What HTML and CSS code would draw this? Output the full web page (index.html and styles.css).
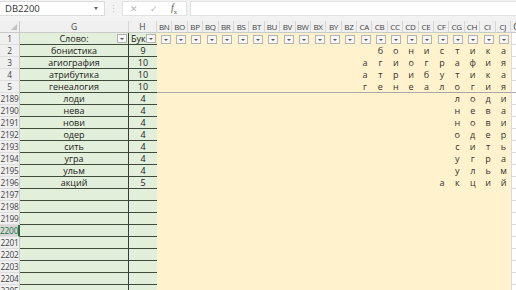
FILE: index.html
```html
<!DOCTYPE html>
<html>
<head>
<meta charset="utf-8">
<link rel="stylesheet" href="styles.css">
</head>
<body>
<div class="app">
  <div class="toolbar">
    <div class="namebox"><span class="nb-text">DB2200</span><span class="nb-arrow"></span></div>
    <div class="sep">⋮</div>
    <div class="fbtns"><span class="fb x">✕</span><span class="fb ok">✓</span><span class="fb fx"><i>f</i><sub>x</sub></span></div>
    <div class="finput"></div>
  </div>
  <div class="sheet">
    <div class="row hdr">
      <div class="rh corner"><span class="tri"></span></div>
      <div class="ch g-w">G</div>
      <div class="ch h-w">H</div>
      <div class="cols">
        <span>BN</span><span>BO</span><span>BP</span><span>BQ</span><span>BR</span><span>BS</span><span>BT</span><span>BU</span><span>BV</span><span>BW</span><span>BX</span><span>BY</span><span>BZ</span><span>CA</span><span>CB</span><span>CC</span><span>CD</span><span>CE</span><span>CF</span><span>CG</span><span>CH</span><span>CI</span><span>CJ</span>
      </div>
      <div class="ch ck-h">CK</div>
    </div>
    <div class="row">
      <div class="rh">1</div>
      <div class="g">Слово:<span class="fbtn"></span></div>
      <div class="h"><span class="htxt">Буквы</span><span class="fbtn"></span></div>
      <div class="letters filters">
        <span><i class="fbtn"></i></span><span><i class="fbtn"></i></span><span><i class="fbtn"></i></span><span><i class="fbtn"></i></span><span><i class="fbtn"></i></span><span><i class="fbtn"></i></span><span><i class="fbtn"></i></span><span><i class="fbtn"></i></span><span><i class="fbtn"></i></span><span><i class="fbtn"></i></span><span><i class="fbtn"></i></span><span><i class="fbtn"></i></span><span><i class="fbtn"></i></span><span><i class="fbtn"></i></span><span><i class="fbtn"></i></span><span><i class="fbtn"></i></span><span><i class="fbtn"></i></span><span><i class="fbtn"></i></span><span><i class="fbtn"></i></span><span><i class="fbtn"></i></span><span><i class="fbtn"></i></span><span><i class="fbtn"></i></span><span><i class="fbtn"></i></span>
      </div>
      <div class="ck"></div>
    </div>
    <div class="row">
      <div class="rh">2</div><div class="g">бонистика</div><div class="h">9</div>
      <div class="letters"><span>б</span><span>о</span><span>н</span><span>и</span><span>с</span><span>т</span><span>и</span><span>к</span><span>а</span></div>
      <div class="ck"></div>
    </div>
    <div class="row">
      <div class="rh">3</div><div class="g">агиография</div><div class="h">10</div>
      <div class="letters"><span>а</span><span>г</span><span>и</span><span>о</span><span>г</span><span>р</span><span>а</span><span>ф</span><span>и</span><span>я</span></div>
      <div class="ck"></div>
    </div>
    <div class="row">
      <div class="rh">4</div><div class="g">атрибутика</div><div class="h">10</div>
      <div class="letters"><span>а</span><span>т</span><span>р</span><span>и</span><span>б</span><span>у</span><span>т</span><span>и</span><span>к</span><span>а</span></div>
      <div class="ck"></div>
    </div>
    <div class="row frozen">
      <div class="rh">5</div><div class="g">генеалогия</div><div class="h">10</div>
      <div class="letters"><span>г</span><span>е</span><span>н</span><span>е</span><span>а</span><span>л</span><span>о</span><span>г</span><span>и</span><span>я</span></div>
      <div class="ck"></div>
    </div>
    <div class="row">
      <div class="rh">2189</div><div class="g">лоди</div><div class="h">4</div>
      <div class="letters"><span>л</span><span>о</span><span>д</span><span>и</span></div>
      <div class="ck"></div>
    </div>
    <div class="row">
      <div class="rh">2190</div><div class="g">нева</div><div class="h">4</div>
      <div class="letters"><span>н</span><span>е</span><span>в</span><span>а</span></div>
      <div class="ck"></div>
    </div>
    <div class="row">
      <div class="rh">2191</div><div class="g">нови</div><div class="h">4</div>
      <div class="letters"><span>н</span><span>о</span><span>в</span><span>и</span></div>
      <div class="ck"></div>
    </div>
    <div class="row">
      <div class="rh">2192</div><div class="g">одер</div><div class="h">4</div>
      <div class="letters"><span>о</span><span>д</span><span>е</span><span>р</span></div>
      <div class="ck"></div>
    </div>
    <div class="row">
      <div class="rh">2193</div><div class="g">сить</div><div class="h">4</div>
      <div class="letters"><span>с</span><span>и</span><span>т</span><span>ь</span></div>
      <div class="ck"></div>
    </div>
    <div class="row">
      <div class="rh">2194</div><div class="g">угра</div><div class="h">4</div>
      <div class="letters"><span>у</span><span>г</span><span>р</span><span>а</span></div>
      <div class="ck"></div>
    </div>
    <div class="row">
      <div class="rh">2195</div><div class="g">ульм</div><div class="h">4</div>
      <div class="letters"><span>у</span><span>л</span><span>ь</span><span>м</span></div>
      <div class="ck"></div>
    </div>
    <div class="row">
      <div class="rh">2196</div><div class="g">акций</div><div class="h">5</div>
      <div class="letters"><span>а</span><span>к</span><span>ц</span><span>и</span><span>й</span></div>
      <div class="ck"></div>
    </div>
    <div class="row"><div class="rh">2197</div><div class="g"></div><div class="h"></div><div class="letters"></div><div class="ck"></div></div>
    <div class="row"><div class="rh">2198</div><div class="g"></div><div class="h"></div><div class="letters"></div><div class="ck"></div></div>
    <div class="row"><div class="rh">2199</div><div class="g"></div><div class="h"></div><div class="letters"></div><div class="ck"></div></div>
    <div class="row"><div class="rh sel">2200</div><div class="g"></div><div class="h"></div><div class="letters"></div><div class="ck"></div></div>
    <div class="row"><div class="rh">2201</div><div class="g"></div><div class="h"></div><div class="letters"></div><div class="ck"></div></div>
    <div class="row"><div class="rh">2202</div><div class="g"></div><div class="h"></div><div class="letters"></div><div class="ck"></div></div>
    <div class="row"><div class="rh">2203</div><div class="g"></div><div class="h"></div><div class="letters"></div><div class="ck"></div></div>
    <div class="row"><div class="rh">2204</div><div class="g"></div><div class="h"></div><div class="letters"></div><div class="ck"></div></div>
    <div class="row"><div class="rh">2205</div><div class="g"></div><div class="h"></div><div class="letters"></div><div class="ck"></div></div>
  </div>
</div>
</body>
</html>
```
FILE: styles.css
```css
* { box-sizing: border-box; }
html, body { margin: 0; padding: 0; }
body {
  width: 516px;
  height: 290px;
  overflow: hidden;
  background: #f3f3f3;
  font-family: "Open Sans", "Noto Sans", sans-serif;
  color: #262626;
}
.app { width: 516px; height: 290px; overflow: hidden; }

/* formula bar */
.toolbar {
  display: flex;
  height: 17px;
  margin-bottom: 4px;
  padding-top: 1px;
}
.namebox {
  width: 105px;
  height: 15px;
  background: #fff;
  border: 1px solid #dcdcdc;
  border-left: none;
  display: flex;
  align-items: center;
  justify-content: space-between;
  padding: 0 6px 0 5px;
  font-size: 9.5px;
  color: #333;
}
.nb-arrow {
  width: 0; height: 0;
  border-left: 2.5px solid transparent;
  border-right: 2.5px solid transparent;
  border-top: 3px solid #666;
}
.sep {
  width: 17px;
  text-align: center;
  font-size: 9px;
  line-height: 15px;
  color: #bdbdbd;
}
.fbtns {
  width: 65px;
  height: 15px;
  background: #fff;
  border: 1px solid #e2e2e2;
  display: flex;
  align-items: center;
  padding-left: 1px;
  font-size: 8.5px;
  color: #b5b5b5;
}
.fb { width: 20px; text-align: center; }
.fb.fx { color: #555; font-family: "Liberation Serif", serif; font-size: 10px; }
.fb.fx sub { font-size: 6.5px; }
.finput {
  flex: 1;
  margin-left: 3px;
  height: 15px;
  background: #fff;
  border: 1px solid #e2e2e2;
  border-right: none;
}

/* sheet */
.sheet { display: flex; flex-direction: column; }
.row {
  display: flex;
  height: 12px;
  flex: none;
  font-size: 9px;
  line-height: 12px;
}
.rh {
  width: 20px;
  flex: none;
  background: #f0f0f0;
  border-right: 1px solid #c9c9c9;
  border-bottom: 1px solid #dedede;
  color: #444;
  font-size: 8.3px;
  line-height: 11px;
  text-align: center;
  letter-spacing: -0.2px;
  overflow: hidden;
  white-space: nowrap;
}
.rh.sel {
  background: #d6d6d6;
  color: #217346;
  border-right: 2px solid #217346;
}
.corner { position: relative; background: #f0f0f0; }
.tri {
  position: absolute;
  right: 2px; bottom: 2px;
  width: 0; height: 0;
  border-left: 6px solid transparent;
  border-bottom: 6px solid #c3c3c3;
}
.hdr .rh, .hdr .ch, .hdr .cols span {
  background: #f0f0f0;
  border-bottom: 1px solid #c9c9c9;
}
.ch {
  flex: none;
  text-align: center;
  color: #444;
  font-size: 8.5px;
  line-height: 11px;
  border-right: 1px solid #d6d6d6;
}
.g-w { width: 109px; }
.h-w { width: 28px; }
.ck-h { flex: 1; text-align: left; padding-left: 2px; border-right: none; overflow: hidden; }
.cols {
  display: grid;
  grid-template-columns: repeat(23, 15.4px);
  width: 354.2px;
  flex: none;
}
.cols span {
  text-align: center;
  color: #444;
  font-size: 8px;
  line-height: 11px;
  letter-spacing: -0.3px;
  border-right: 1px solid #d6d6d6;
  white-space: nowrap;
  overflow: hidden;
}

.g, .h {
  flex: none;
  background: #e2efda;
  border-bottom: 1px solid #3f4a3a;
  text-align: center;
  color: #222;
  line-height: 11px;
  position: relative;
  white-space: nowrap;
}
.g { width: 109px; border-right: 1px solid #3a3a3a; }
.h { width: 28px; }
.htxt {
  position: absolute;
  left: 2px; top: 0;
  width: 15px;
  overflow: hidden;
  text-align: left;
}

.fbtn {
  position: absolute;
  right: 1px; top: 1px;
  width: 10px; height: 9px;
  background: #f7f7f7;
  border: 1px solid #b4b4b4;
  display: flex;
  align-items: center;
  justify-content: center;
}
.fbtn::after {
  content: "";
  width: 0; height: 0;
  border-left: 2px solid transparent;
  border-right: 2px solid transparent;
  border-top: 2.5px solid #555;
}

.letters {
  flex: none;
  width: 354.2px;
  background: #fff2cc;
  display: grid;
  grid-auto-flow: column;
  grid-auto-columns: 15.4px;
  justify-content: end;
}
.letters span {
  text-align: center;
  color: #333;
  position: relative;
}
.filters .fbtn { right: 2px; top: 2px; }
.frozen .letters, .frozen .ck { border-bottom: 1px solid #a8a8a8; }

.ck {
  flex: 1;
  background: #fff;
  border-bottom: 1px solid #dadada;
  border-left: 1px solid #dadada;
}
```
